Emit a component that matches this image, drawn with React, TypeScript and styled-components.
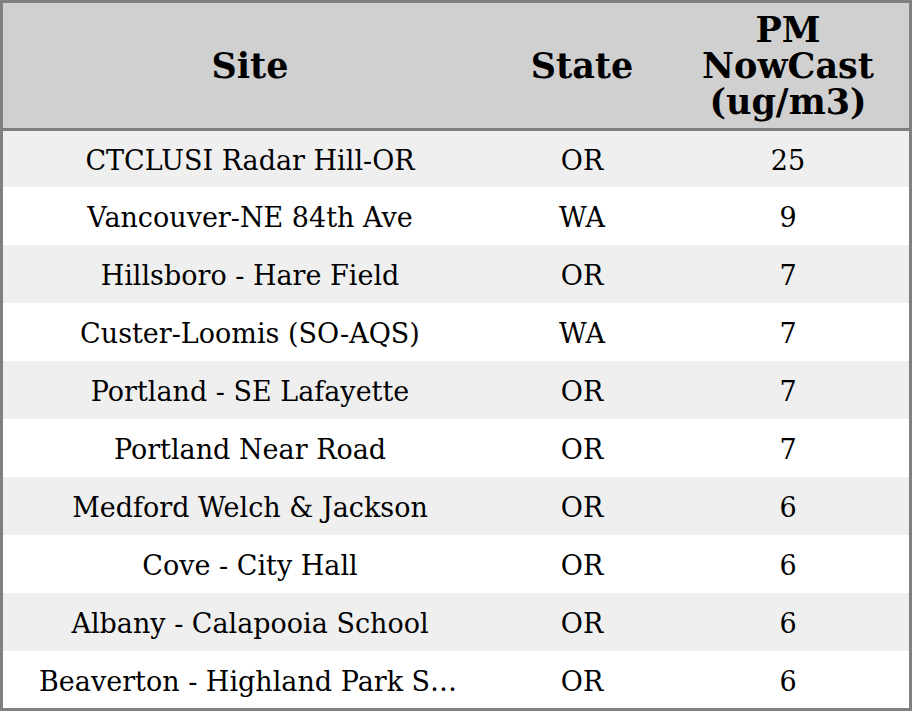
import React from 'react'
import styled, { createGlobalStyle } from 'styled-components'

const GlobalStyle = createGlobalStyle`
  html, body { margin: 0; padding: 0; background: #fff; }
  * { box-sizing: border-box; }
`

type Site = { name: string; state: string; value: number }

const sites: Site[] = [
  { name: 'CTCLUSI Radar Hill-OR', state: 'OR', value: 25 },
  { name: 'Vancouver-NE 84th Ave', state: 'WA', value: 9 },
  { name: 'Hillsboro - Hare Field', state: 'OR', value: 7 },
  { name: 'Custer-Loomis (SO-AQS)', state: 'WA', value: 7 },
  { name: 'Portland - SE Lafayette', state: 'OR', value: 7 },
  { name: 'Portland Near Road', state: 'OR', value: 7 },
  { name: 'Medford Welch & Jackson', state: 'OR', value: 6 },
  { name: 'Cove - City Hall', state: 'OR', value: 6 },
  { name: 'Albany - Calapooia School', state: 'OR', value: 6 },
  { name: 'Beaverton - Highland Park School', state: 'OR', value: 6 },
]

const Table = styled.div`
  width: 912px;
  height: 711px;
  border: 3px solid #808080;
  display: flex;
  flex-direction: column;
  overflow: hidden;
  font-family: 'DejaVu Serif', 'Liberation Serif', serif;
  color: #000;
`

const Body = styled.div`
  display: flex;
  flex-direction: column;
`

const Row = styled.div<{ $shade?: boolean }>`
  height: 58px;
  flex: none;
  display: grid;
  grid-template-columns: 494px 170px 1fr;
  align-items: center;
  background: ${p => (p.$shade ? '#efefef' : '#ffffff')};
  &:first-child { height: 56px; }
  &:last-child { height: 57px; }
`

const HeaderRow = styled.div`
  height: 128px;
  flex: none;
  display: grid;
  grid-template-columns: 494px 170px 1fr;
  align-items: center;
  background: #d0d0d0;
  border-bottom: 3px solid #808080;
`

const HeadCell = styled.div`
  text-align: center;
  font-weight: bold;
  font-size: 35px;
  line-height: 36px;
  padding: 0 8px;
`

const Cell = styled.div<{ $wide?: boolean }>`
  text-align: center;
  font-size: 27px;
  line-height: 32px;
  padding: 4px ${p => (p.$wide ? '36px' : '8px')} 0;
  white-space: nowrap;
  overflow: hidden;
  text-overflow: ellipsis;
`

export default function App() {
  return (
    <>
      <GlobalStyle />
      <Table>
        <HeaderRow>
          <HeadCell>Site</HeadCell>
          <HeadCell>State</HeadCell>
          <HeadCell>PM NowCast (ug/m3)</HeadCell>
        </HeaderRow>
        <Body>
          {sites.map((s, i) => (
            <Row key={s.name} $shade={i % 2 === 0}>
              <Cell $wide>{s.name}</Cell>
              <Cell>{s.state}</Cell>
              <Cell>{s.value}</Cell>
            </Row>
          ))}
        </Body>
      </Table>
    </>
  )
}
